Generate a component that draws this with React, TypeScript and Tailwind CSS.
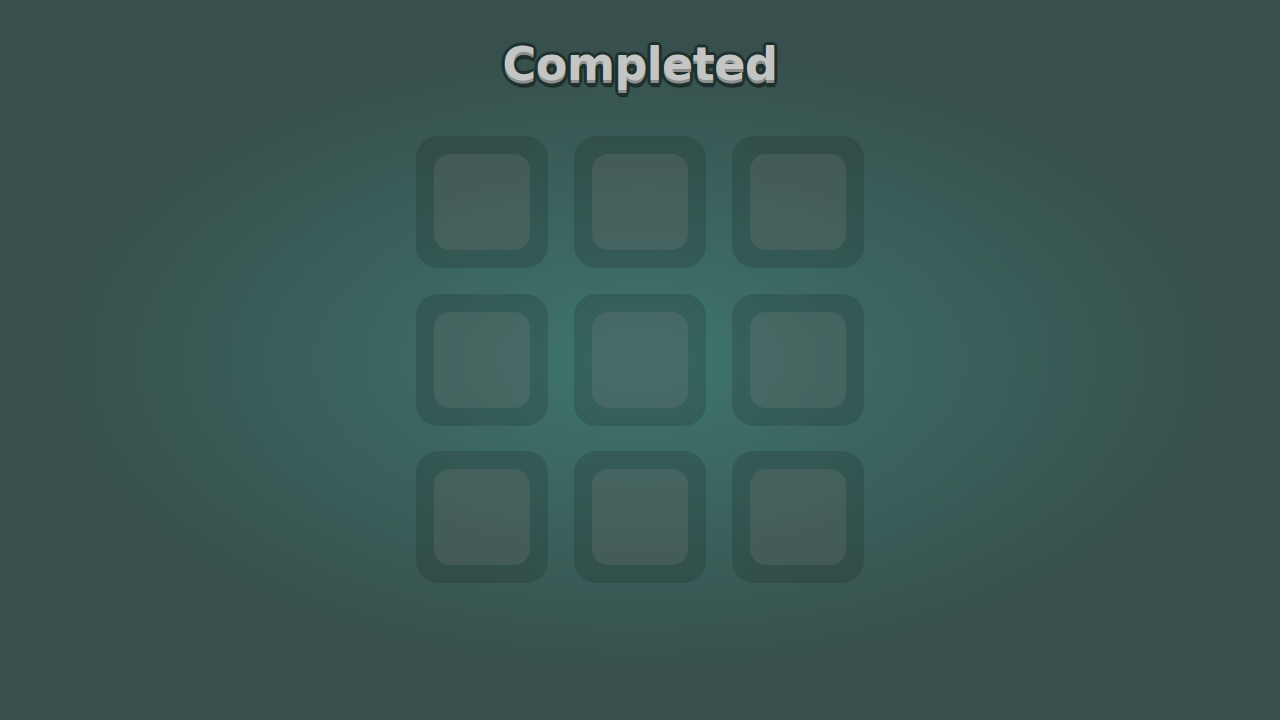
const tiles = Array.from({ length: 9 }, (_, i) => i);

export default function App() {
  return (
    <div className="w-[1280px] h-[720px] overflow-hidden flex flex-col items-center bg-[radial-gradient(ellipse_580px_310px_at_50%_50%,#3f756f_0%,#3a5f5a_60%,#37504d_100%)]">
      <h1 className="mt-[36px] h-[56px] text-[46px] leading-[56px] font-bold text-[#c4c5c5] [font-family:'DejaVu_Sans',sans-serif] tracking-[-0.5px] [text-shadow:0_3px_0_#8d8f8e,3px_0_0_#1f302d,-3px_0_0_#1f302d,0_-3px_0_#1f302d,2px_-2px_0_#1f302d,-2px_-2px_0_#1f302d,3px_3px_0_#1f302d,-3px_3px_0_#1f302d,2px_5px_0_#1f302d,-2px_5px_0_#1f302d,0_6px_0_#1f302d,1px_7px_1px_#1b2826]">
        Completed
      </h1>
      <div className="mt-[44px] grid grid-cols-[repeat(3,132px)] gap-x-[26px] gap-y-[25.5px]">
        {tiles.map((t) => (
          <div
            key={t}
            className="w-[132px] h-[132px] rounded-[22px] bg-black/[0.13] p-[18px]"
          >
            <div className="w-full h-full rounded-[16px] bg-[#8c8c8c]/[0.2]" />
          </div>
        ))}
      </div>
    </div>
  );
}
